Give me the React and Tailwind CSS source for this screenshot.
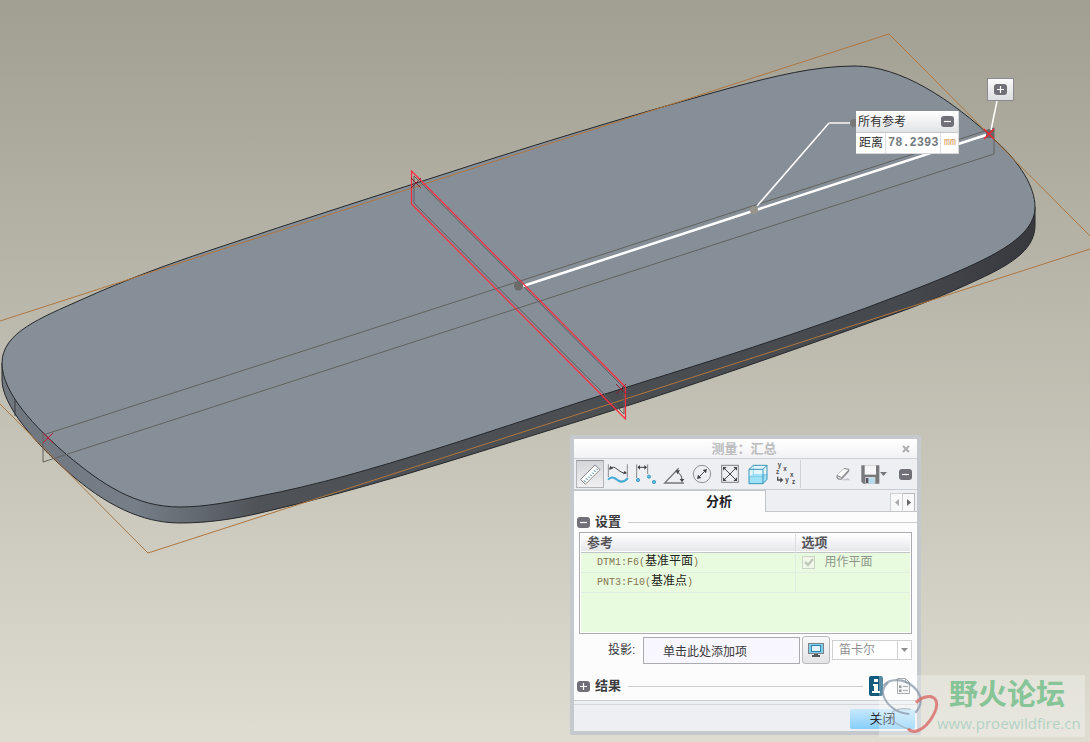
import { useState } from "react";

// top face outline, clockwise from the left end
const TOP_FACE = `M2 363C2 333 40 318 83 299C125 280 166 265 208 251C300 220 395 190 488 160
    C570 134 650 110 730 88C775 76 815 66 855 66C900 66 950 98 997 142C1020 163 1035 187 1035 207
    C1035 238 990 258 938 280C840 320 740 352 640 383C493 429 370 475 260 496
    C230 502 205 507 180 507C135 507 102 484 67 455C35 427 2 393 2 363Z`;

// side wall below the top face, left to right
const RIM = `M2 363V380C2 405 35 443 67 471C105 505 142 523 180 523C207 523 235 519 260 513
    C360 490 450 461 550 430C665 395 780 355 877 320C915 307 945 295 977 280
    C1017 262 1035 247 1035 225V207`;

function Model() {
    return (
        <svg className="absolute inset-0 h-full w-full" viewBox="0 0 1090 742" preserveAspectRatio="xMinYMin slice" fill="none" aria-hidden="true">
            <defs>
                <linearGradient id="rim" gradientUnits="userSpaceOnUse" x1="0" y1="0" x2="1036" y2="0">
                    <stop offset="0" stopColor="#70767e" />
                    <stop offset="0.13" stopColor="#767e88" />
                    <stop offset="0.18" stopColor="#666d74" />
                    <stop offset="0.25" stopColor="#4f5358" />
                    <stop offset="0.6" stopColor="#4a4e51" />
                    <stop offset="0.87" stopColor="#45484d" />
                    <stop offset="1" stopColor="#38393f" />
                </linearGradient>
            </defs>
            <path d={RIM} fill="url(#rim)" stroke="#26282b" />
            <path d={TOP_FACE} fill="#868e97" stroke="#25282b" />
            <path d="M15 399V416" stroke="#3a3d42" />

            <path d="M0 321L889 34L1090 236M1090 249L148 553L0 404" stroke="#b0763f" />

            <path d="M43 435L994 128V154L43 462Z" stroke="#62625f" />
            <path d="M414 176V203L624 414V388Z" stroke="#5c5f5e" />

            <path d="M523 286L989 134" stroke="#fff" strokeWidth="2.5" />
            <path d="M411.5 171V204L625.5 419V387Z" stroke="#ff2a40" strokeWidth="1.2" />
            <circle cx="518.5" cy="286" r="4.5" fill="#6b6b69" />
            <circle cx="754" cy="210" r="4" fill="#97958b" />
            <path d="M757 206L829 123" stroke="#fff" strokeWidth="1.5" />
            <path d="M829 123H853" stroke="#dcdcda" strokeWidth="2" />
            <circle cx="854" cy="123" r="4" fill="#777" />
            <path d="M997 101L991 130" stroke="#fff" strokeWidth="1.5" />

            <path d="M411 178L421 188M421 178L411 188M616 384L626 394M626 384L616 394" stroke="#8c1c30" />
            <path d="M43 433L53 443M53 433L43 443" stroke="#c01838" />
            <rect x="986" y="130" width="8" height="8" fill="#666" />
            <path d="M984 129L994 139M994 129L984 139" stroke="#ff2030" strokeWidth="1.4" />
        </svg>
    );
}

function ToggleIcon({ open }) {
    return (
        <svg className="block h-[11px] w-[13px] shrink-0" viewBox="0 0 13 11" aria-hidden="true">
            <rect width="13" height="11" rx="3" fill="#716f78" />
            <path d={open ? "M3 5.5H10" : "M3 5.5H10M6.5 2V9"} stroke="#fff" strokeWidth="1.2" />
        </svg>
    );
}

const TOOLS = [
    {
        name: "汇总",
        icon: (
            <>
                <path d="M14 58L57 15L72 29L28 73Z" fill="#fff" stroke="#8b8b8f" strokeWidth="3" />
                <path d="M28 66l-4 -5M35 60l-5 -5M41 54l-4 -4M47 48l-5 -5M53 42l-4 -4M59 36l-5 -5M65 30l-4 -4" stroke="#2b7ca4" strokeWidth="3" />
            </>
        ),
    },
    {
        name: "长度",
        icon: (
            <>
                <path d="M13 13V51M70 13V51" stroke="#88888c" strokeWidth="3" />
                <path d="M17 26C34 10 44 42 66 39" stroke="#44444a" strokeWidth="3" />
                <path d="M15 29L19 17L27 26ZM69 40L57 43L62 32Z" fill="#44444a" />
                <path d="M12 59C24 47 34 55 42 61S61 66 72 54" stroke="#44acd4" strokeWidth="6" />
            </>
        ),
    },
    {
        name: "距离",
        icon: (
            <>
                <path d="M14 13V54M47 13V42" stroke="#88888c" strokeWidth="3" />
                <path d="M18 22H43" stroke="#44444a" strokeWidth="3" />
                <path d="M16 22L24 15V29ZM45 22L37 15V29Z" fill="#44444a" />
                <g fill="#55b8de" stroke="#2f8fb8" strokeWidth="2">
                    <circle cx="18" cy="60" r="5" />
                    <circle cx="51" cy="50" r="5" />
                    <circle cx="66" cy="66" r="5" />
                </g>
            </>
        ),
    },
    {
        name: "角度",
        icon: (
            <>
                <path d="M56 25L14 69H72" stroke="#77777b" strokeWidth="4" />
                <path d="M52 36C62 42 66 50 66 62" stroke="#44444a" strokeWidth="3" />
                <path d="M47 31H60L52 43ZM59 57H73L66 67Z" fill="#44444a" />
            </>
        ),
    },
    {
        name: "直径",
        icon: (
            <>
                <circle cx="42" cy="42" r="26" stroke="#929296" strokeWidth="3" />
                <path d="M31 53L53 31" stroke="#44444a" strokeWidth="3" />
                <path d="M27 57L30 44L40 54ZM57 27L54 40L44 30Z" fill="#44444a" />
            </>
        ),
    },
    {
        name: "面积",
        icon: (
            <>
                <rect x="17" y="16" width="50" height="51" stroke="#808084" strokeWidth="3" />
                <path d="M24 24L60 60M60 24L24 60" stroke="#44444a" strokeWidth="3" />
                <path d="M21 21H32L21 32ZM63 21V32L52 21ZM21 63V52L32 63ZM63 63H52L63 52Z" fill="#44444a" />
            </>
        ),
    },
    {
        name: "体积",
        icon: (
            <>
                <path d="M15 28L28 16H69V58L57 71H15Z" fill="#e2f6fc" />
                <path d="M15 50L27 42H69V58L57 71H15Z" fill="#9fe2f7" />
                <path d="M15 50H57L69 40M28 16V44" stroke="#6cc4e2" strokeWidth="2" />
                <path d="M15 28H57V71H15ZM15 28L28 16H69V58L57 71M57 28L69 16" stroke="#3b95b8" strokeWidth="3" />
            </>
        ),
    },
    {
        name: "变换",
        icon: (
            <g fill="#4c4c50" fontFamily="Liberation Sans" fontWeight="bold" fontSize="19">
                <text x="17" y="20">y</text>
                <text x="34" y="33">x</text>
                <text x="12" y="43">z</text>
                <text x="40" y="67">y</text>
                <text x="54" y="50">x</text>
                <text x="60" y="73">z</text>
                <path d="M17 50V60H27" stroke="#4c4c50" strokeWidth="4" fill="none" />
                <path d="M25 52V68L34 60Z" />
            </g>
        ),
    },
];

function Toolbar({ expanded, onToggle }) {
    const [active, setActive] = useState(0);
    return (
        <div className="flex h-[31px] items-center border-b border-[#c9ccd0] bg-[#eeeff2] pl-0.5">
            {TOOLS.map((t, i) => (
                <button
                    key={t.name}
                    type="button"
                    aria-label={t.name}
                    onClick={() => setActive(i)}
                    className={`h-7 w-7 shrink-0 ${i === active ? "border border-[#b4b4b8] border-t-[#8e8e92] bg-linear-to-b from-[#d4d5d8] to-[#f0f0f2]" : ""}`}
                >
                    <svg className={i === active ? "-m-px h-7 w-7" : "h-7 w-7"} viewBox="0 0 84 84" fill="none">{t.icon}</svg>
                </button>
            ))}
            <div className="h-7 w-px bg-[#cfd2d6]" />
            <div className="ml-auto flex items-center">
                <button type="button" aria-label="清除" className="mr-2.5">
                    <svg className="block h-4 w-4" viewBox="0 0 48 48" fill="none">
                        <path d="M18 43H47L38 37Z" fill="#c4c4c8" />
                        <path d="M5 28L25 8Q27 6 30 6L41 8Q44 9 43 13L42 17L20 41H11Q5 39 4 33Z" fill="#8f8f94" />
                        <path d="M7 27L26 9L40 11L20 33Z" fill="#fff" />
                        <path d="M7 31L19 35L17 38L10 37Z" fill="#e8e8ea" />
                    </svg>
                </button>
                <button type="button" aria-label="保存" className="mr-3 flex items-center">
                    <svg className="block h-[19px] w-[19px]" viewBox="0 0 57 57" fill="none">
                        <path d="M1 1H55V56H7L1 50Z" fill="#77777c" />
                        <path d="M11 1H45V29H11Z" fill="#f6f6f7" />
                        <path d="M13 36H43V56H13Z" fill="#d8d8dc" />
                        <path d="M22 39H40V56H22Z" fill="#b4dcf0" />
                        <path d="M15 39H22V54H15Z" fill="#55555b" />
                    </svg>
                    <svg className="block h-1 w-[7px]" viewBox="0 0 7 4"><path d="M0 0H7L3.5 4Z" fill="#77777b" /></svg>
                </button>
                <button type="button" aria-label="折叠" className="mr-[5px]" onClick={onToggle}>
                    <ToggleIcon open={expanded} />
                </button>
            </div>
        </div>
    );
}

function SectionHead({ title, open, onToggle, children }) {
    return (
        <div className="flex items-center">
            <button type="button" onClick={onToggle} className="flex items-center gap-[5px] text-[13px] leading-4 font-bold text-[#3c3c3e]">
                <ToggleIcon open={open} />
                {title}
            </button>
            <div className="ml-[7px] h-px flex-1 bg-[#cfcfd2]" />
            {children}
        </div>
    );
}

const REFS = [
    { id: "DTM1:F6", kind: "基准平面", plane: true },
    { id: "PNT3:F10", kind: "基准点" },
];

function ReferenceTable() {
    return (
        <div className="mx-[5px] h-[102px] border border-[#a9abae] bg-white p-px">
            <div className="h-full bg-[#e9fbdf]">
                <table className="w-full table-fixed border-collapse text-left text-xs">
                    <thead>
                        <tr className="h-[18px] border-b border-[#c2c5c9] bg-linear-to-b from-white to-[#e6e7ea] text-[13px] leading-4 text-[#55555a]">
                            <th className="w-[214px] border-r border-[#dcdee0] p-0 pl-1.5">参考</th>
                            <th className="p-0 pl-1.5">选项</th>
                        </tr>
                    </thead>
                    <tbody>
                        {REFS.map((r) => (
                            <tr key={r.id} className="h-5 border-b border-[#e2eee4]">
                                <td className="border-r border-[#e0ece6] p-0 pl-4 leading-4 text-[#1e2420]">
                                    <span className="font-['Liberation_Mono'] text-[10px] text-[#85754f]">{r.id}(</span>
                                    {r.kind}
                                    <span className="font-['Liberation_Mono'] text-[10px] text-[#85754f]">)</span>
                                </td>
                                <td className="p-0 pl-1.5 leading-4 text-[#8d988a]">
                                    {r.plane && (
                                        <label className="flex items-center gap-2.5">
                                            <span className="grid">
                                                <input type="checkbox" defaultChecked disabled className="col-start-1 row-start-1 h-[13px] w-[13px] appearance-none border border-[#cbd5c8] bg-[#f0f8ea]" />
                                                <svg className="col-start-1 row-start-1 h-[13px] w-[13px]" viewBox="0 0 13 13" fill="none">
                                                    <path d="M3 6L6 9L11 3" stroke="#c0cabc" strokeWidth="2.5" />
                                                </svg>
                                            </span>
                                            用作平面
                                        </label>
                                    )}
                                </td>
                            </tr>
                        ))}
                    </tbody>
                </table>
            </div>
        </div>
    );
}

function MeasureDialog() {
    const [expanded, setExpanded] = useState(true);
    const [settings, setSettings] = useState(true);
    const [results, setResults] = useState(false);

    return (
        <section aria-label="测量" className="absolute left-[570px] top-[435px] w-[351px] border-4 border-[#c5c9cd] bg-[#fcfcfc] text-xs">
            <header className="flex h-5 items-center border-b border-[#cdd0d4] bg-linear-to-b from-white to-[#f2f2f4]">
                <h1 className="flex-1 pl-3 text-center text-[13px] leading-4 font-bold text-[#bcbcbf]">测量：汇总</h1>
                <button type="button" aria-label="关闭窗口" className="mr-[7px]">
                    <svg className="block h-2 w-2" viewBox="0 0 8 8"><path d="M1 1L7 7M7 1L1 7" stroke="#aeaeb1" strokeWidth="2" /></svg>
                </button>
            </header>
            <Toolbar expanded={expanded} onToggle={() => setExpanded((v) => !v)} />

            {expanded && (
                <>
                    <div role="tablist" className="flex h-[22px] bg-[#eeeff2]">
                        <button type="button" role="tab" aria-selected="true" className="w-48 border-t border-r border-[#c4c7ca] bg-[#fcfcfc] pl-[132px] text-left text-[13px] leading-4 font-bold text-[#202022]">
                            分析
                        </button>
                        <div className="flex flex-1 items-end justify-end border-b border-[#c4c7ca] pr-0.5">
                            <button type="button" aria-label="上一页" className="flex h-[18px] w-[13px] items-center justify-center border border-b-0 border-[#cfd1d4] bg-[#f8f8f9]">
                                <svg className="h-[7px] w-1" viewBox="0 0 4 7"><path d="M4 0V7L0 3.5Z" fill="#aaaaad" /></svg>
                            </button>
                            <button type="button" aria-label="下一页" className="flex h-[18px] w-3 items-center justify-center border border-b-0 border-l-0 border-[#b6b9bc] bg-[#f8f8f9]">
                                <svg className="h-[7px] w-1" viewBox="0 0 4 7"><path d="M0 0V7L4 3.5Z" fill="#66666a" /></svg>
                            </button>
                        </div>
                    </div>

                    <div className="flex h-[188px] flex-col pt-0.5">
                        <div className="pl-[3px]">
                            <SectionHead title="设置" open={settings} onToggle={() => setSettings((v) => !v)} />
                        </div>
                        {settings && (
                            <>
                                <div className="mt-0.5"><ReferenceTable /></div>
                                <div className="mt-0.5 flex items-center pr-[5px] pl-[34px] text-[#38383a]">
                                    <label htmlFor="projection" className="w-[35px]">投影:</label>
                                    <input
                                        id="projection"
                                        defaultValue="单击此处添加项"
                                        className="h-[27px] min-w-0 flex-1 border border-[#a9abae] bg-[#f8f6fe] pl-[19px] text-xs outline-none"
                                    />
                                    <button type="button" aria-label="屏幕投影" className="mx-0.5 flex h-7 w-7 items-center justify-center rounded-[3px] border border-[#b9b9bc] bg-linear-to-b from-[#f8f8f9] to-[#e4e4e6]">
                                        <svg className="h-4 w-4" viewBox="0 0 16 16" fill="none">
                                            <rect x="0.5" y="1.5" width="15" height="10" fill="#7fd0f0" stroke="#7d8488" />
                                            <rect x="3.5" y="3.5" width="9" height="6" fill="#e4f6fd" stroke="#2f86ac" />
                                            <path d="M6 12H10V13H12V15H4V13H6Z" fill="#55585c" />
                                        </svg>
                                    </button>
                                    <div className="grid w-20">
                                        <select aria-label="坐标系类型" disabled className="col-start-1 row-start-1 h-5 appearance-none border border-[#cfd1d3] bg-white pl-1.5 text-xs text-[#909092]">
                                            <option>笛卡尔</option>
                                        </select>
                                        <span className="pointer-events-none col-start-1 row-start-1 my-px mr-px flex w-3.5 items-center justify-center justify-self-end border-l border-[#cfd1d3]">
                                            <svg className="h-1 w-[7px]" viewBox="0 0 7 4"><path d="M0 0H7L3.5 4Z" fill="#909093" /></svg>
                                        </span>
                                    </div>
                                </div>
                            </>
                        )}
                        <div className="mt-3 pr-[7px] pl-[3px]">
                            <SectionHead title="结果" open={results} onToggle={() => setResults((v) => !v)}>
                                <button type="button" aria-label="信息" className="ml-1.5">
                                    <svg className="block h-5 w-[14px]" viewBox="0 0 14 20">
                                        <rect width="14" height="20" rx="2" fill="#135a7d" />
                                        <path d="M5 3H9V6H5ZM4 8H9V15H11V17H3V15H5V10H4Z" fill="#fff" />
                                    </svg>
                                </button>
                                <button type="button" aria-label="报告" className="ml-3.5">
                                    <svg className="block h-4 w-[13px]" viewBox="0 0 13 16" fill="none">
                                        <path d="M0.5 0.5H8.5L12.5 4.5V15.5H0.5Z" fill="#f2f4f6" stroke="#85888d" />
                                        <path d="M8.5 0.5V4.5H12.5M6 8.5H11M6 12.5H11" stroke="#85888d" />
                                        <path d="M2 7.5H4.5V10H2ZM2 11.5H4.5V14H2Z" fill="#6d7075" />
                                    </svg>
                                </button>
                            </SectionHead>
                        </div>
                    </div>
                </>
            )}

            <footer className="border-t border-[#c9ccd0] bg-[#eeeff2] pt-[3px]">
                <div className="flex justify-end border-t border-[#d5d7da] pt-1 pr-0.5 pb-0.5">
                    <button type="button" className="h-5 w-[65px] rounded-[2px] bg-linear-to-b from-[#c6e8fb] to-[#86cefa] text-[13px] leading-4 text-[#262a30]">
                        关闭
                    </button>
                </div>
            </footer>
        </section>
    );
}

function Callouts() {
    return (
        <>
            <button type="button" aria-label="展开" className="absolute left-[987px] top-[78px] flex h-[23px] w-[27px] items-center justify-center border border-[#8a8a90] bg-linear-to-b from-[#fafafa] to-[#dddee0]">
                <ToggleIcon />
            </button>
            <div className="absolute left-[856px] top-[111px] w-[103px] border-r border-b border-[#d8d8da] bg-white text-xs text-[#303032]">
                <div className="flex h-[22px] items-center justify-between border-b border-[#c4c6c9] bg-linear-to-b from-white to-[#e2e3e5] pr-1 pl-0.5">
                    所有参考
                    <button type="button" aria-label="收起"><ToggleIcon open /></button>
                </div>
                <div className="flex h-5 items-center">
                    <span className="w-[30px] border-r border-[#e0e0e2] pl-[3px] leading-5">距离</span>
                    <span className="flex-1 pl-0.5 font-['Liberation_Mono'] leading-5 font-bold text-[#767b80]">78.2393</span>
                    <span className="w-[18px] border-l border-[#e0e0e2] pl-[3px] font-['Liberation_Mono'] text-[10px] leading-5 text-[#d99a58]">mm</span>
                </div>
            </div>
        </>
    );
}

function Watermark() {
    return (
        <div className="pointer-events-none absolute left-[879px] top-[675px] flex h-[62px] w-[206px] bg-white/30">
            <svg className="h-[62px] w-[62px] shrink-0" viewBox="417 135 186 186" fill="none">
                <path d="M444 158C428 172 424 186 434 206C446 230 474 250 508 252" stroke="#8797a8" strokeOpacity="0.75" strokeWidth="6" />
                <path d="M430 168C450 142 494 146 520 170C546 194 550 222 526 248" stroke="#8797a8" strokeOpacity="0.75" strokeWidth="7" />
                <path d="M512 238C482 232 454 240 454 256C454 276 484 292 514 300" stroke="#a3acb6" strokeOpacity="0.7" strokeWidth="4" />
                <path d="M528 218C546 198 578 192 588 212C598 236 566 288 538 300C524 306 512 306 504 296" stroke="#d8625f" strokeOpacity="0.75" strokeWidth="9" />
            </svg>
            <div className="flex flex-col whitespace-nowrap">
                <span className="pl-2 text-[29px] leading-[40px] font-bold text-[#87c497]">野火论坛</span>
                <span className="-ml-1 font-['Open_Sans'] text-[15px] leading-4 text-[#b3d3c6]">www.proewildfire.cn</span>
            </div>
        </div>
    );
}

export default function App() {
    return (
        <main className="relative min-h-screen overflow-hidden bg-linear-to-b from-[#a19f92] to-[#dfddd1] font-['Liberation_Sans','Noto_Sans_CJK_SC',sans-serif]">
            <Model />
            <Callouts />
            <MeasureDialog />
            <Watermark />
        </main>
    );
}
